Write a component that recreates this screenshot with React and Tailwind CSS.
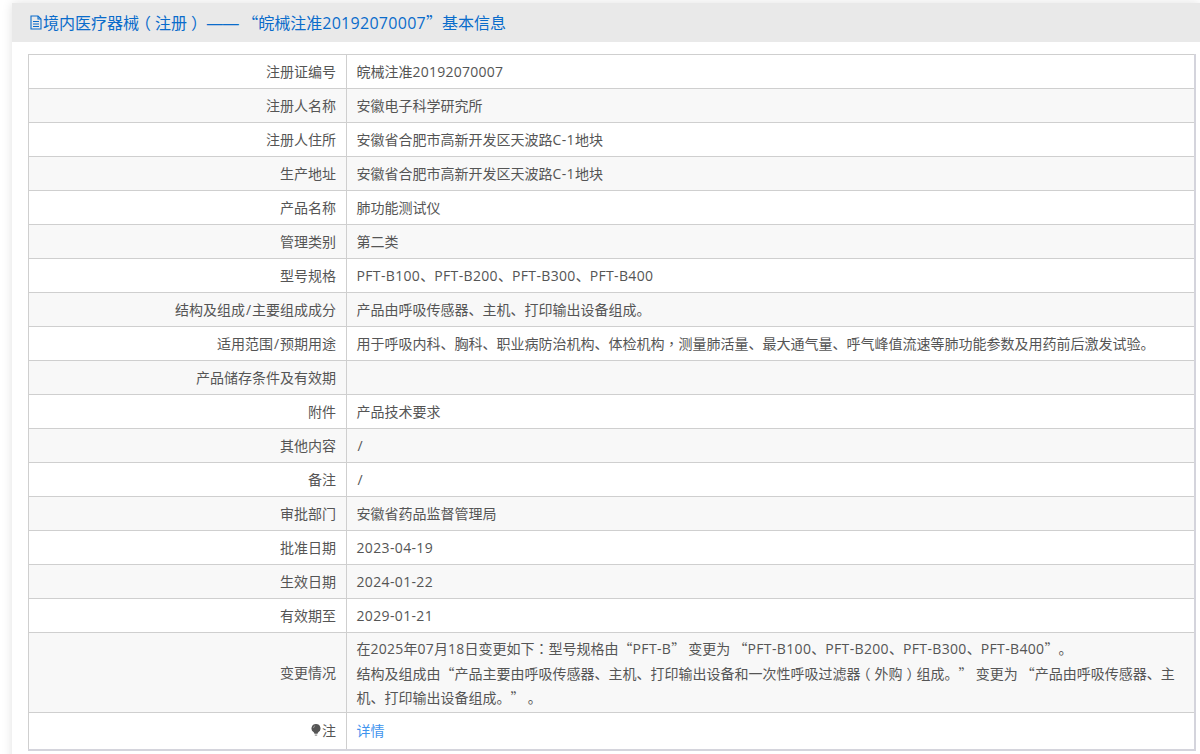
const rows = [
  ["注册证编号", "皖械注准20192070007"],
  ["注册人名称", "安徽电子科学研究所"],
  ["注册人住所", "安徽省合肥市高新开发区天波路C-1地块"],
  ["生产地址", "安徽省合肥市高新开发区天波路C-1地块"],
  ["产品名称", "肺功能测试仪"],
  ["管理类别", "第二类"],
  ["型号规格", "PFT-B100、PFT-B200、PFT-B300、PFT-B400"],
  ["结构及组成/主要组成成分", "产品由呼吸传感器、主机、打印输出设备组成。"],
  ["适用范围/预期用途", "用于呼吸内科、胸科、职业病防治机构、体检机构，测量肺活量、最大通气量、呼气峰值流速等肺功能参数及用药前后激发试验。"],
  ["产品储存条件及有效期", ""],
  ["附件", "产品技术要求"],
  ["其他内容", "/"],
  ["备注", "/"],
  ["审批部门", "安徽省药品监督管理局"],
  ["批准日期", "2023-04-19"],
  ["生效日期", "2024-01-22"],
  ["有效期至", "2029-01-21"],
];

// The picture's font sets Latin runs a little wider and centres ，：（） in their em box.
function T({ children }) {
  const parts = children.split(/([A-Za-z0-9\-\/]+|[，：（）]|——)/).filter(Boolean);
  return parts.map((p, i) => {
    if (p === "——")
      return <span key={i} className="font-['Liberation_Sans',sans-serif]">{p}</span>;
    if (p === "，" || p === "：")
      return <span key={i} className="font-['Noto_Sans_CJK_TC',sans-serif]">{p}</span>;
    if (p === "（") return <span key={i} className="inline-block -ml-[4px] mr-[4px]">{p}</span>;
    if (p === "）") return <span key={i} className="inline-block ml-[4px] -mr-[4px]">{p}</span>;
    if (p.includes("-"))
      return <span key={i} className="font-['Open_Sans',sans-serif] tracking-[0.025em]">{p}</span>;
    if (p === "/")
      return <span key={i} className="font-['Open_Sans',sans-serif] inline-block w-[7px] text-center">{p}</span>;
    if (/^[A-Za-z0-9]+$/.test(p))
      return <span key={i} className="font-['Open_Sans',sans-serif] tracking-[0.018em]">{p}</span>;
    return <span key={i}>{p}</span>;
  });
}

function FileIcon() {
  return (
    <svg width="14" height="15" viewBox="0 0 14 15" fill="none" stroke="#0a6ccb" strokeWidth="1.1" className="shrink-0">
      <path d="M2 1h7l3 3v10H2z" />
      <path d="M9 1v3h3M4 6.5h6M4 9h6M4 11.5h6" />
    </svg>
  );
}

function BulbIcon() {
  return (
    <svg width="10" height="14" viewBox="0 0 10 14" className="mr-[1px]">
      <path d="M5 1a4.4 4.4 0 0 0-2.3 8.2c.5.4.7.9.7 1.5h3.2c0-.6.2-1.1.7-1.5A4.4 4.4 0 0 0 5 1z" fill="#555" />
      <path d="M3.8 11.6h2.4v1H3.8z" fill="#777" />
      <path d="M2.5 5a2.4 2.4 0 0 1 1.6-2.2" stroke="#aaa" strokeWidth="0.8" fill="none" />
    </svg>
  );
}

function Row({ label, i, children, h = "h-[34px]" }) {
  return (
    <tr className={`${i % 2 === 1 ? "bg-[#f8f8f8]" : "bg-white"} ${h}`}>
      <td className="border border-[#cfcfcf] w-[318px] px-[10px] text-right align-middle"><T>{label}</T></td>
      <td className="border border-[#cfcfcf] pl-[9.5px] pr-[10px] align-middle">{children}</td>
    </tr>
  );
}

export default function App() {
  return (
    <div className="w-[1200px] h-[754px] overflow-hidden bg-white pt-[3px] pl-[12px] font-['Noto_Sans_CJK_SC',sans-serif] text-[14px] text-[#555] [text-spacing-trim:space-all]">
      <div className="h-[800px] bg-white shadow-[0_0_10px_rgba(0,0,0,0.12)]">
        <div className="h-[39px] bg-[#e9e9e9] flex items-center pl-[17px] text-[16px] text-[#0a6ccb] whitespace-pre">
          <FileIcon />
          <span><T>境内医疗器械（注册） —— “皖械注准20192070007”基本信息</T></span>
        </div>
        <div className="pt-[12px] pl-[16px]">
          <table className="w-[1168px] border-collapse border-r-2 border-r-[#d4d4dc] table-fixed">
            <tbody>
              {rows.map(([k, v], i) => (
                <Row key={k} label={k} i={i}><T>{v}</T></Row>
              ))}
              <Row label="变更情况" i={17} h="h-[80px]">
                <div className="leading-[24px]">
                  <div><T>在2025年07月18日变更如下：型号规格由“PFT-B” 变更为 “PFT-B100、PFT-B200、PFT-B300、PFT-B400”。</T></div>
                  <div><T>结构及组成由“产品主要由呼吸传感器、主机、打印输出设备和一次性呼吸过滤器（外购）组成。” 变更为 “产品由呼吸传感器、主机、打印输出设备组成。” 。</T></div>
                </div>
              </Row>
              <tr className="h-[37px] bg-white">
                <td className="border border-[#cfcfcf] border-b-2 border-b-[#d4d4dc] px-[10px] text-right align-middle">
                  <span className="inline-flex items-center justify-end"><BulbIcon />注</span>
                </td>
                <td className="border border-[#cfcfcf] border-b-2 border-b-[#d4d4dc] pl-[9.5px] pr-[10px] align-middle text-[#3f94ee]">详情</td>
              </tr>
            </tbody>
          </table>
        </div>
      </div>
    </div>
  );
}
